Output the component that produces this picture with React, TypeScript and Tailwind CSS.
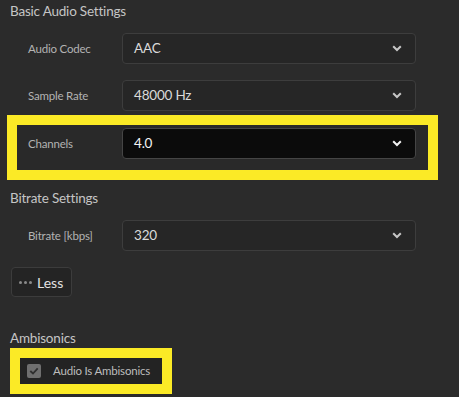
function Chevron({ light }: { light?: boolean }) {
  return (
    <svg width="10" height="7" viewBox="0 0 10 7" className="shrink-0">
      <path
        d="M1.2 1.2 L5 5 L8.8 1.2"
        fill="none"
        stroke={light ? '#f2f2f2' : '#c6c6c6'}
        strokeWidth="2"
      />
    </svg>
  );
}

function Select({ value, active }: { value: string; active?: boolean }) {
  return (
    <div
      className={`flex h-[31px] w-[294px] items-center justify-between rounded-[4px] border pl-[11px] pr-[13px] text-[13.5px] tracking-[-0.2px] ${
        active
          ? 'border-[#454545] bg-[#0b0b0b] text-[#f4f4f4]'
          : 'border-[#3d3d3d] bg-[#262626] text-[#dadada]'
      }`}
    >
      <span>{value}</span>
      <Chevron light={active} />
    </div>
  );
}

function Row({ label, value }: { label: string; value: string }) {
  return (
    <div className="flex items-center">
      <div className="w-[122px] pl-[28px] text-[11.5px] tracking-[-0.2px] text-[#b3b3b3]">{label}</div>
      <Select value={value} />
    </div>
  );
}

function Heading({ children }: { children: React.ReactNode }) {
  return (
    <div className="h-[19px] pl-[10px] text-[13.5px] leading-[19px] tracking-[-0.2px] text-[#c5c5c5]">
      {children}
    </div>
  );
}

export default function App() {
  return (
    <div
      className="flex h-[397px] w-[459px] flex-col overflow-hidden bg-[#2b2b2b]"
      style={{ fontFamily: 'Lato, "Open Sans", sans-serif' }}
    >
      <div className="mt-[2px]">
        <Heading>Basic Audio Settings</Heading>
      </div>

      <div className="mt-[12px]">
        <Row label="Audio Codec" value="AAC" />
      </div>
      <div className="mt-[16px]">
        <Row label="Sample Rate" value="48000 Hz" />
      </div>

      {/* highlighted row */}
      <div className="ml-[7px] mt-[4px] w-[431px] border-[10px] border-[#fbea26]">
        <div className="flex h-[45px] items-start bg-[#292929] pl-[11px] pt-[3px]">
          <div className="flex h-[31px] w-[94px] items-center text-[11.5px] tracking-[-0.2px] text-[#b3b3b3]">
            Channels
          </div>
          <Select value="4.0" active />
        </div>
      </div>

      <div className="mt-[9px]">
        <Heading>Bitrate Settings</Heading>
      </div>
      <div className="mt-[12px]">
        <Row label="Bitrate [kbps]" value="320" />
      </div>

      <button
        type="button"
        className="ml-[11px] mt-[16px] flex h-[30px] w-[61px] items-center gap-[5px] rounded-[4px] border border-[#3c3c3c] bg-[#242424] pl-[7px] text-[14px] text-[#e2e2e2]"
      >
        <span className="flex gap-[2px]">
          <span className="h-[3px] w-[3px] rounded-full bg-[#8a8a8a]" />
          <span className="h-[3px] w-[3px] rounded-full bg-[#8a8a8a]" />
          <span className="h-[3px] w-[3px] rounded-full bg-[#8a8a8a]" />
        </span>
        Less
      </button>

      <div className="mt-[32px]">
        <Heading>Ambisonics</Heading>
      </div>

      <div className="ml-[10px] w-[162px] border-[10px] border-[#fbea26]">
        <div className="flex h-[26px] items-center gap-[12px] bg-[#232323] pl-[7px] text-[11.5px] tracking-[-0.2px] text-[#bdbdbd]">
          <span className="flex h-[14px] w-[14px] items-center justify-center rounded-[2px] bg-[#6f6f6f]">
            <svg width="10" height="8" viewBox="0 0 10 8">
              <path d="M1.3 4 L4 6.5 L8.7 1.3" fill="none" stroke="#2f2f2f" strokeWidth="1.8" />
            </svg>
          </span>
          Audio Is Ambisonics
        </div>
      </div>
    </div>
  );
}
